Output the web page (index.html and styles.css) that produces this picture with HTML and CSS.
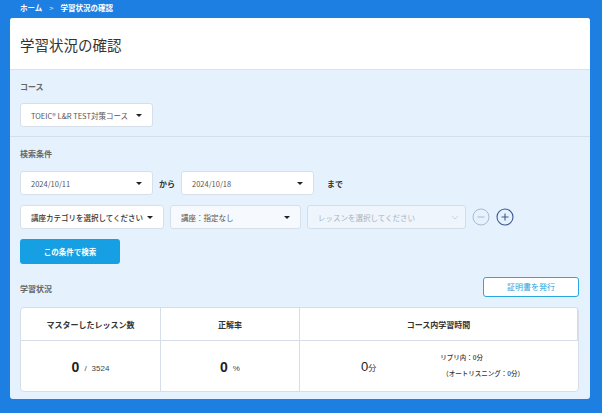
FILE: index.html
```html
<!DOCTYPE html>
<html lang="ja">
<head>
<meta charset="utf-8">
<link rel="stylesheet" href="styles.css">
</head>
<body>
<nav class="crumbs"><span>ホーム</span><span class="sep">&gt;</span><span>学習状況の確認</span></nav>
<main class="card">
  <header class="head"><h1>学習状況の確認</h1></header>
  <section class="sec course">
    <div class="label">コース</div>
    <div class="sel w133"><span>TOEIC® L&amp;R TEST対策コース</span><i class="caret"></i></div>
  </section>
  <section class="sec search">
    <div class="label">検索条件</div>
    <div class="row">
      <div class="sel w133"><span>2024/10/11</span><i class="caret"></i></div>
      <span class="word">から</span>
      <div class="sel w133"><span>2024/10/18</span><i class="caret"></i></div>
      <span class="word">まで</span>
    </div>
    <div class="row r2">
      <div class="sel w144"><span class="dark">講座カテゴリを選択してください</span><i class="caret"></i></div>
      <div class="sel w130 soft"><span>講座：指定なし</span><i class="caret"></i></div>
      <div class="sel w159 dis"><span>レッスンを選択してください</span><svg class="chev" width="8" height="5" viewBox="0 0 8 5"><path d="M1 1l3 3 3-3" fill="none" stroke="#c5cfdb" stroke-width="0.9"/></svg></div>
      <svg class="circ" width="18" height="18" viewBox="0 0 18 18"><circle cx="9" cy="9" r="8" fill="none" stroke="#aab8d0" stroke-width="1"/><path d="M5.5 9h7" stroke="#aab8d0" stroke-width="1"/></svg>
      <svg class="circ" width="18" height="18" viewBox="0 0 18 18"><circle cx="9" cy="9" r="8" fill="none" stroke="#3b5a8f" stroke-width="1.1"/><path d="M5.5 9h7M9 5.5v7" stroke="#3b5a8f" stroke-width="1.1"/></svg>
    </div>
    <button class="btn">この条件で検索</button>
    <div class="statushead">
      <div class="label">学習状況</div>
      <button class="cert">証明書を発行</button>
    </div>
    <div class="table">
      <div class="th">マスターしたレッスン数</div>
      <div class="th">正解率</div>
      <div class="th">コース内学習時間</div>
      <div class="td"><b class="big">0</b><span class="small">/</span><span class="small">3524</span></div>
      <div class="td"><b class="big">0</b><span class="small">%</span></div>
      <div class="td time">
        <div class="tmain"><span class="big2">0</span><span class="unit">分</span></div>
        <div class="tsub"><div>リプリ内：0分</div><div class="ind">（オートリスニング：0分）</div></div>
      </div>
    </div>
  </section>
</main>
</body>
</html>
```
FILE: styles.css
```css
* { box-sizing: border-box; }
html, body { margin: 0; }
body {
  background: #1c7fe1;
  font-family: "Noto Sans CJK JP", "Noto Sans", sans-serif;
  width: 602px; height: 413px; overflow: hidden;
  padding: 0 12px 0 10px;
}
.crumbs {
  height: 18px; display: flex; align-items: center; gap: 7px;
  padding-left: 10px; color: #fff; font-size: 7.5px; font-weight: 700;
  line-height: 1; padding-bottom: 3px;
}
.crumbs .sep { font-weight: 400; opacity: .8; }
.card {
  width: 580px; height: 381px; background: #e5f1fd; border-radius: 3px; overflow: hidden;
}
.head { background: #fff; height: 52px; border-bottom: 1px solid #d6e2ee; display: flex; align-items: center; padding-left: 10px; }
h1 { margin: 0; font-size: 14.5px; font-weight: 400; color: #333; padding-top: 1px; }
.sec { padding: 0 10px; }
.course { height: 67px; border-bottom: 1px solid #d3e0ec; padding-top: 11px; }
.label { font-size: 8px; font-weight: 700; color: #666; line-height: 12px; }
.course .label { margin-bottom: 10px; }
.sel {
  height: 24px; background: #fff; border: 1px solid #d7dfe8; border-radius: 3px;
  display: flex; align-items: center; justify-content: space-between;
  padding: 0 10px 0 10px; font-size: 7.5px; color: #555;
}
.sel .dark { color: #333; font-weight: 500; }
.w133 { width: 133px; }
.w144 { width: 144px; }
.w130 { width: 131px; }
.w159 { width: 159px; }
.soft { background: #f6f9fd; }
.dis { background: #eef5fd; color: #a8b2be; border-color: #d3dde8; padding-right: 6px; }
.caret { width: 0; height: 0; border-left: 3px solid transparent; border-right: 3px solid transparent; border-top: 3.5px solid #222; }
.search { padding-top: 11px; }
.search > .label { margin-bottom: 11px; }
.row { display: flex; align-items: center; gap: 6px; }
.row .word { font-size: 8px; font-weight: 700; color: #333; }
.row .word:last-child { margin-left: 7px; }
.r2 { margin-top: 10px; gap: 6px; }
.circ { display: block; }
.btn {
  margin-top: 10px; width: 100px; height: 25px; border: 0; border-radius: 3px;
  background: #16a0e3; color: #fff; font: 700 7.5px "Noto Sans CJK JP", sans-serif; display: block;
}
.statushead { display: flex; justify-content: space-between; align-items: center; margin-top: 13px; height: 21px; padding-right: 1px; }
.statushead .label { padding-top: 2px; }
.cert {
  width: 96px; height: 20px; background: #fff; border: 1px solid #28a7e3; border-radius: 3px;
  color: #2aa3dd; font: 400 8px "Noto Sans CJK JP", sans-serif; padding: 0; margin-top: -2px;
}
.table {
  margin-top: 9px; width: 559px; height: 85px; background: #fff; border: 1px solid #d5dde6; border-radius: 4px;
  display: grid; grid-template-columns: 140px 139px 1fr; grid-template-rows: 33px 1fr;
}
.th { display: flex; align-items: center; justify-content: center; font-size: 8px; font-weight: 700; color: #333; border-bottom: 1px solid #d5dde6; }
.th:not(:last-child), .td:not(:last-child) { border-right: 1px solid #d5dde6; }
.td { display: flex; align-items: center; justify-content: center; gap: 5px; padding-top: 1px; }
.big { font: 700 14px "Liberation Sans", Arial, sans-serif; color: #222; }
.small { font: 400 8px "Liberation Sans", Arial, sans-serif; color: #444; padding-top: 4px; }
.td.time { justify-content: flex-start; padding-left: 61px; gap: 64px; }
.tmain { display: flex; align-items: baseline; }
.big2 { font: 400 13px "Liberation Sans", Arial, sans-serif; color: #222; }
.unit { font-size: 8px; color: #333; }
.tsub { font-size: 6.5px; color: #333; line-height: 16px; font-weight: 500; margin-top: -4px; }
.tsub .ind { padding-left: 2px; }
```
